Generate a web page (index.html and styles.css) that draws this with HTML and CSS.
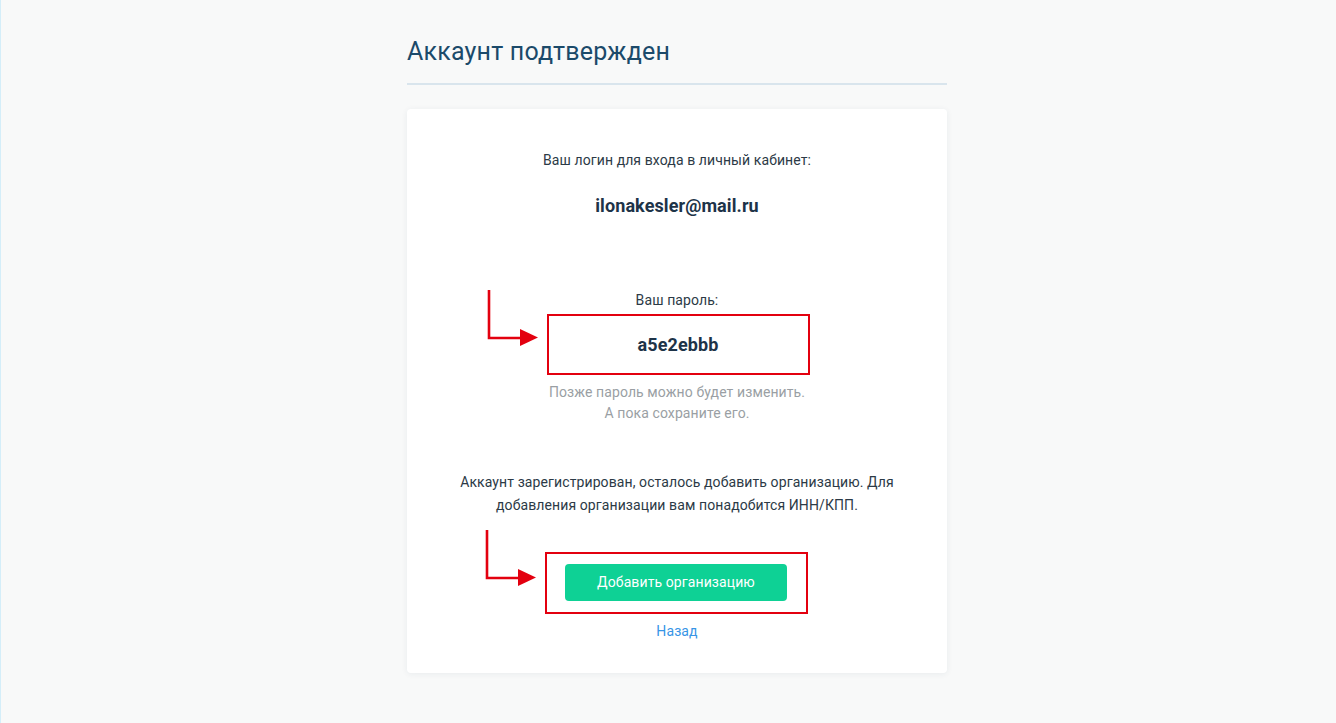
FILE: index.html
```html
<!DOCTYPE html>
<html lang="ru">
<head>
<meta charset="utf-8">
<title>Аккаунт подтвержден</title>
<link rel="stylesheet" href="styles.css">
</head>
<body>
<div class="page">
  <main class="wrap">
    <h1 class="title">Аккаунт подтвержден</h1>
    <div class="divider"></div>
    <section class="card">
      <p class="label">Ваш логин для входа в личный кабинет:</p>
      <p class="value login">ilonakesler@mail.ru</p>
      <p class="label pass-label">Ваш пароль:</p>
      <div class="frame pass-frame"><span class="value">a5e2ebbb</span></div>
      <p class="hint">Позже пароль можно будет изменить.<br>А пока сохраните его.</p>
      <p class="info">Аккаунт зарегистрирован, осталось добавить организацию. Для<br>добавления организации вам понадобится ИНН/КПП.</p>
      <div class="frame btn-frame"><button class="btn" type="button">Добавить организацию</button></div>
      <a class="back" href="#">Назад</a>

      <svg class="arrow arrow-1" width="64" height="66" viewBox="0 0 64 66">
        <path d="M9 5 V53 H42" fill="none" stroke="#e3000f" stroke-width="2.6"/>
        <polygon points="40,44 58,52.5 40,61" fill="#e3000f"/>
      </svg>
      <svg class="arrow arrow-2" width="64" height="66" viewBox="0 0 64 66">
        <path d="M7 5 V53 H40" fill="none" stroke="#e3000f" stroke-width="2.6"/>
        <polygon points="38,44 56,52.5 38,61" fill="#e3000f"/>
      </svg>
    </section>
  </main>
</div>
</body>
</html>
```

FILE: styles.css
```css
html, body {
  margin: 0;
  padding: 0;
}
body {
  background: #f8f9f9;
  font-family: Roboto, "Liberation Sans", Arial, sans-serif;
  color: #2c3a46;
  border-left: 1px solid #d4eef9;
  min-height: 723px;
  box-sizing: border-box;
}
.page {
  display: flex;
  justify-content: center;
  padding-left: 17px;
}
.wrap {
  width: 540px;
  padding-top: 35px;
}
.title {
  margin: 0;
  font-size: 25px;
  font-weight: 400;
  line-height: 34px;
  color: #1b4a6a;
  letter-spacing: 0.2px;
}
.divider {
  height: 2px;
  background: #d9e5ed;
  margin-top: 14px;
}
.card {
  position: relative;
  margin-top: 24px;
  background: #fff;
  border-radius: 4px;
  box-shadow: 0 1px 6px rgba(30, 50, 80, 0.07);
  padding: 41px 0 32px;
  display: flex;
  flex-direction: column;
  align-items: center;
  text-align: center;
  letter-spacing: 0.1px;
}
.card p {
  margin: 0;
}
.label {
  font-size: 14px;
  line-height: 20px;
  color: #2c3a46;
}
.value {
  font-size: 18px;
  font-weight: 700;
  line-height: 24px;
  color: #1d3348;
}
.login {
  margin-top: 24px !important;
}
.pass-label {
  margin-top: 72px !important;
}
.frame {
  box-sizing: border-box;
  width: 263px;
  border: 2px solid #e3000f;
  display: flex;
  align-items: center;
  justify-content: center;
}
.pass-frame {
  margin-top: 4px;
  height: 61px;
  margin-left: 2px;
}
.hint {
  margin-top: 7px !important;
  font-size: 14px;
  line-height: 21px;
  color: #9a9fa4;
}
.info {
  margin-top: 47px !important;
  font-size: 14px;
  line-height: 23px;
  color: #2c3a46;
}
.btn-frame {
  margin-top: 35px;
  height: 62px;
  margin-left: -2px;
  padding-bottom: 2px;
}
.btn {
  width: 222px;
  height: 37px;
  border: 0;
  border-radius: 4px;
  background: #0ed195;
  color: #fff;
  font-family: Roboto, "Liberation Sans", Arial, sans-serif;
  font-size: 14px;
  letter-spacing: 0.1px;
  line-height: 37px;
  padding: 0;
  cursor: pointer;
}
.back {
  margin-top: 7px;
  font-size: 14px;
  line-height: 20px;
  color: #3795e6;
  text-decoration: none;
}
.arrow {
  position: absolute;
  left: 73px;
}
.arrow-1 {
  top: 176px;
}
.arrow-2 {
  top: 416px;
}
```
